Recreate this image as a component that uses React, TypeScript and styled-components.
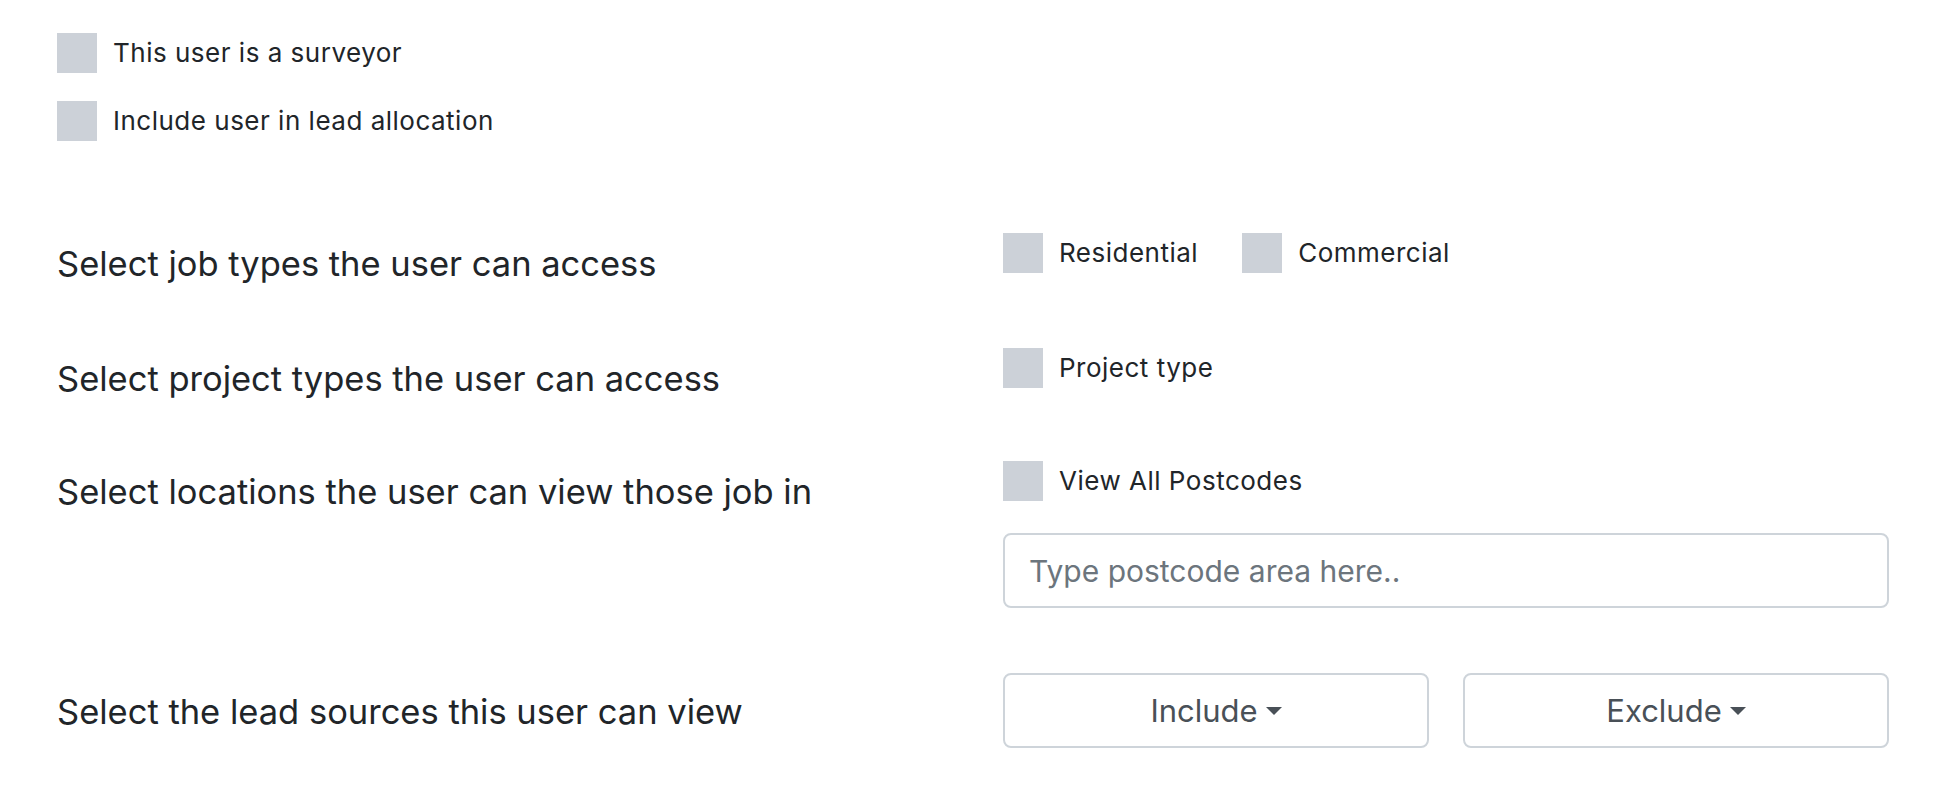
import React from 'react';
import styled, { createGlobalStyle } from 'styled-components';

const GlobalStyle = createGlobalStyle`
  body {
    margin: 0;
    background: #ffffff;
    font-family: Inter, "Noto Sans", "Liberation Sans", sans-serif;
    color: #212529;
  }
  * {
    box-sizing: border-box;
  }
`;

const Page = styled.div`
  padding: 33px 63px 40px 57px;
`;

const CheckList = styled.div`
  display: flex;
  flex-direction: column;
  gap: 28px;
  margin-bottom: 92px;
`;

const CheckLabel = styled.label`
  display: inline-flex;
  align-items: center;
  gap: 16px;
  font-size: 26px;
  letter-spacing: 0.5px;
  line-height: 40px;
  color: #212529;
  cursor: pointer;
  white-space: nowrap;
`;

const Box = styled.span`
  display: inline-block;
  width: 40px;
  height: 40px;
  flex: none;
  background: #ccd1d8;
`;

const Row = styled.div<{ $top?: number }>`
  display: grid;
  grid-template-columns: 1fr 886px;
  align-items: start;
  margin-top: ${(p) => p.$top ?? 0}px;
`;

const Heading = styled.h5<{ $offset?: number }>`
  margin: ${(p) => p.$offset ?? 10}px 0 0 0;
  font-size: 34.5px;
  font-weight: 400;
  line-height: 42px;
  color: #212529;
`;

const Options = styled.div`
  display: flex;
  align-items: center;
  gap: 44px;
`;

const Stack = styled.div`
  display: flex;
  flex-direction: column;
  gap: 32px;
`;

const TextInput = styled.input`
  width: 100%;
  height: 75px;
  padding: 0 24px;
  border: 2px solid #ced4da;
  border-radius: 8px;
  font-family: inherit;
  font-size: 30px;
  color: #495057;
  background: #fff;
  outline: none;

  &::placeholder {
    color: #6c757d;
  }
`;

const ButtonPair = styled.div`
  display: grid;
  grid-template-columns: 1fr 1fr;
  gap: 34px;
`;

const DropButton = styled.button`
  height: 75px;
  border: 2px solid #ced4da;
  border-radius: 8px;
  background: #fff;
  font-family: inherit;
  font-size: 31px;
  color: #495057;
  display: flex;
  align-items: center;
  justify-content: center;
  cursor: pointer;

  &::after {
    content: '';
    display: inline-block;
    margin-left: 8px;
    border-top: 8px solid #495057;
    border-left: 8px solid transparent;
    border-right: 8px solid transparent;
  }
`;

function Check({ label }: { label: string }) {
  return (
    <CheckLabel>
      <Box />
      {label}
    </CheckLabel>
  );
}

export default function App() {
  return (
    <Page>
      <GlobalStyle />
      <CheckList>
        <Check label="This user is a surveyor" />
        <Check label="Include user in lead allocation" />
      </CheckList>

      <Row>
        <Heading>Select job types the user can access</Heading>
        <Options>
          <Check label="Residential" />
          <Check label="Commercial" />
        </Options>
      </Row>

      <Row $top={63}>
        <Heading>Select project types the user can access</Heading>
        <Options>
          <Check label="Project type" />
        </Options>
      </Row>

      <Row $top={61}>
        <Heading>Select locations the user can view those job in</Heading>
        <Stack>
          <Options>
            <Check label="View All Postcodes" />
          </Options>
          <TextInput placeholder="Type postcode area here.." />
        </Stack>
      </Row>

      <Row $top={65}>
        <Heading $offset={18}>Select the lead sources this user can view</Heading>
        <ButtonPair>
          <DropButton>Include</DropButton>
          <DropButton>Exclude</DropButton>
        </ButtonPair>
      </Row>
    </Page>
  );
}
